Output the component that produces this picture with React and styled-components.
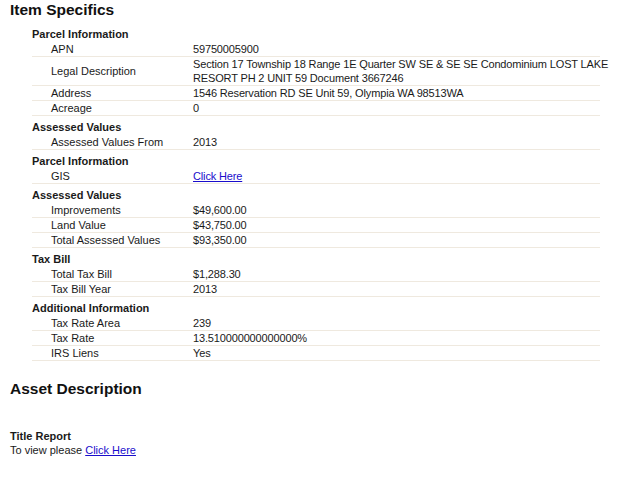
import styled, { createGlobalStyle } from 'styled-components'

const GlobalStyle = createGlobalStyle`
  body {
    margin: 0;
    background: #fff;
    font-family: "Liberation Sans", Arial, sans-serif;
    font-size: 11px;
    color: #1a1a1a;
  }
`

const Page = styled.div`
  padding: 0 10px 20px 10px;
`

const SectionTitle = styled.h2`
  margin: 0;
  font-size: 15.5px;
  font-weight: bold;
  line-height: 19px;
  color: #111;
`

const Specifics = styled.div`
  width: 568px;
  margin: 8px 0 0 22px;
`

const Group = styled.div`
  margin-top: 4px;
`

const GroupTitle = styled.div`
  font-weight: bold;
  line-height: 15px;
`

const Row = styled.div`
  display: grid;
  grid-template-columns: 142px 1fr;
  align-items: center;
  padding-left: 19px;
  border-bottom: 1px solid #efe9df;
  line-height: 14px;
`

const Label = styled.div``

// the source font runs a touch narrower, so let long values spill a few px
const Value = styled.div`
  margin-right: -22px;
  letter-spacing: -0.15px;
`

const Link = styled.a`
  color: #1a0dcc;
  text-decoration: underline;
`

const AssetTitle = styled(SectionTitle)`
  margin-top: 18px;
`

const TitleReport = styled.div`
  margin-top: 31px;
  line-height: 14px;
`

const SubHeading = styled.div`
  font-weight: bold;
`

const groups = [
  {
    title: 'Parcel Information',
    rows: [
      ['APN', '59750005900'],
      [
        'Legal Description',
        'Section 17 Township 18 Range 1E Quarter SW SE & SE SE Condominium LOST LAKE RESORT PH 2 UNIT 59 Document 3667246',
      ],
      ['Address', '1546 Reservation RD SE Unit 59, Olympia WA 98513WA'],
      ['Acreage', '0'],
    ],
  },
  {
    title: 'Assessed Values',
    rows: [['Assessed Values From', '2013']],
  },
  {
    title: 'Parcel Information',
    rows: [['GIS', <Link href="#">Click Here</Link>]],
  },
  {
    title: 'Assessed Values',
    rows: [
      ['Improvements', '$49,600.00'],
      ['Land Value', '$43,750.00'],
      ['Total Assessed Values', '$93,350.00'],
    ],
  },
  {
    title: 'Tax Bill',
    rows: [
      ['Total Tax Bill', '$1,288.30'],
      ['Tax Bill Year', '2013'],
    ],
  },
  {
    title: 'Additional Information',
    rows: [
      ['Tax Rate Area', '239'],
      ['Tax Rate', '13.510000000000000%'],
      ['IRS Liens', 'Yes'],
    ],
  },
]

export default function App() {
  return (
    <Page>
      <GlobalStyle />
      <SectionTitle>Item Specifics</SectionTitle>
      <Specifics>
        {groups.map((group, i) => (
          <Group key={i}>
            <GroupTitle>{group.title}</GroupTitle>
            {group.rows.map(([label, value]) => (
              <Row key={label}>
                <Label>{label}</Label>
                <Value>{value}</Value>
              </Row>
            ))}
          </Group>
        ))}
      </Specifics>
      <AssetTitle>Asset Description</AssetTitle>
      <TitleReport>
        <SubHeading>Title Report</SubHeading>
        <div>
          To view please <Link href="#">Click Here</Link>
        </div>
      </TitleReport>
    </Page>
  )
}
